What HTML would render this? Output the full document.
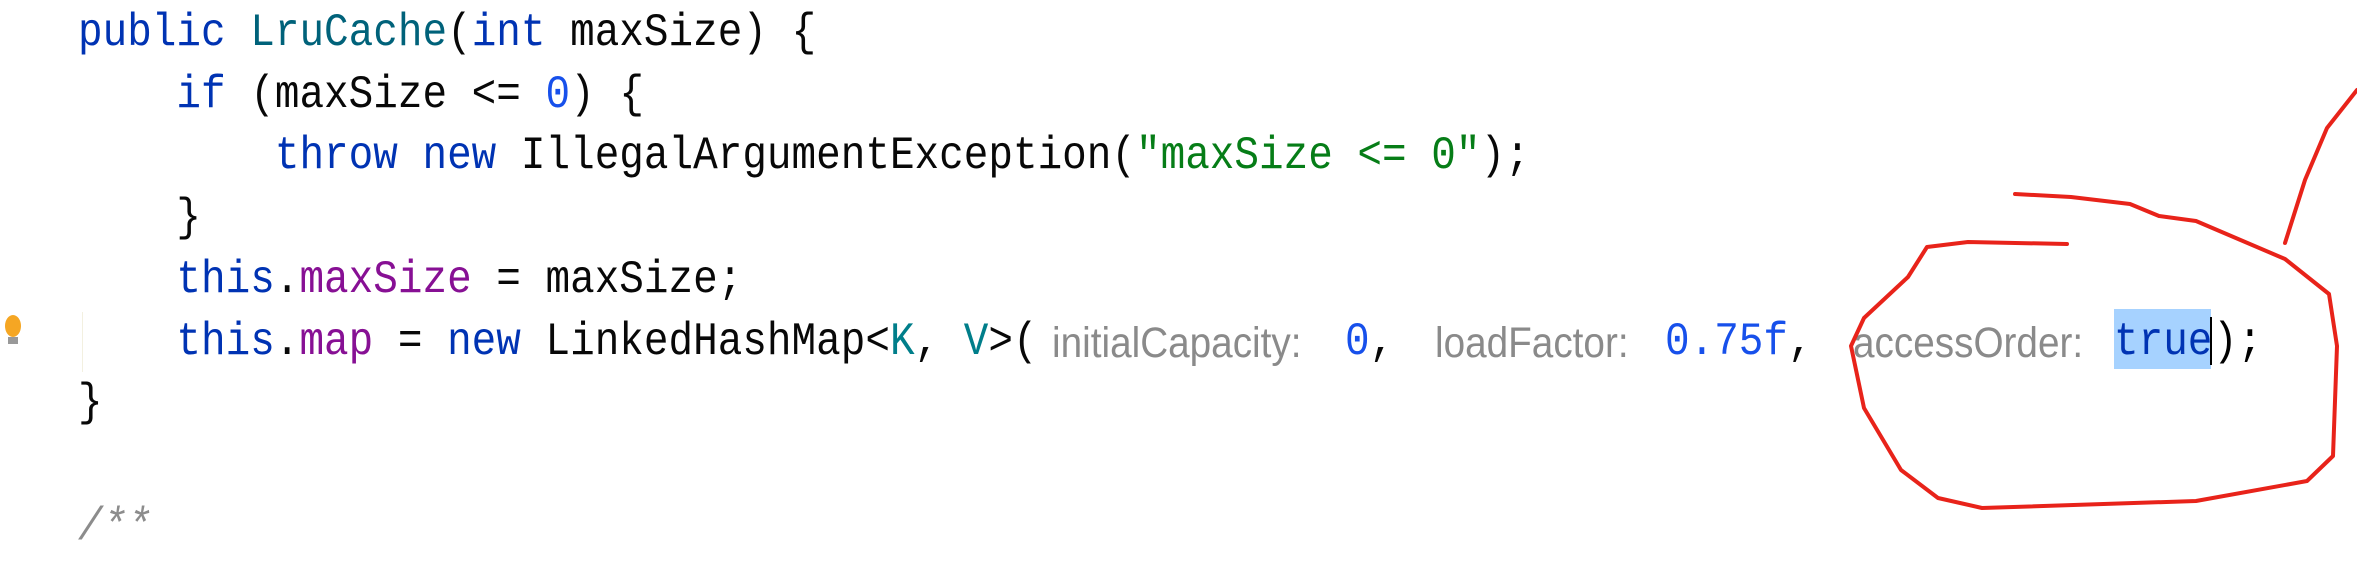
<!DOCTYPE html>
<html><head><meta charset="utf-8"><style>
body{margin:0;width:2357px;height:542px;background:#fff;overflow:hidden;position:relative}
.l{position:absolute;left:78px;font-family:"Liberation Mono",monospace;font-size:41px;line-height:62px;color:#080808;white-space:pre;transform:scaleY(1.12);transform-origin:left center}
.k{color:#0033b3}.c{color:#00627a}.f{color:#871094}.s{color:#067d17}.n{color:#1750eb}.t{color:#007e8a}
.h{position:absolute;font-family:"Liberation Sans",sans-serif;font-size:43px;color:#8a8a8a;line-height:62px;top:312px;white-space:pre;transform:scaleX(0.9);transform-origin:left center}
.m{position:absolute;top:312px;font-family:"Liberation Mono",monospace;font-size:41px;line-height:62px;white-space:pre;transform:scaleY(1.12);transform-origin:left center}
</style></head><body>
<div class="l" style="top:3px"><span class="k">public</span> <span class="c">LruCache</span>(<span class="k">int</span> maxSize) {</div>
<div class="l" style="top:65px">    <span class="k">if</span> (maxSize &lt;= <span class="n">0</span>) {</div>
<div class="l" style="top:126px">        <span class="k">throw new</span> IllegalArgumentException(<span class="s">"maxSize &lt;= 0"</span>);</div>
<div class="l" style="top:188px">    }</div>
<div class="l" style="top:250px">    <span class="k">this</span>.<span class="f">maxSize</span> = maxSize;</div>
<div class="l" style="top:312px">    <span class="k">this</span>.<span class="f">map</span> = <span class="k">new</span> LinkedHashMap&lt;<span class="t">K</span>, <span class="t">V</span>&gt;(</div>
<div class="h" style="left:1052px">initialCapacity:</div>
<div class="m n" style="left:1345px">0<span style="color:#080808">,</span></div>
<div class="h" style="left:1435px">loadFactor:</div>
<div class="m n" style="left:1665px">0.75f<span style="color:#080808">,</span></div>
<div class="h" style="left:1853px">accessOrder:</div>
<div style="position:absolute;left:2114px;top:309px;width:97px;height:60px;background:#a6d2ff"></div>
<div class="m k" style="left:2114px">true</div>
<div style="position:absolute;left:2210px;top:317px;width:2px;height:48px;background:#000"></div>
<div class="m" style="left:2213px">);</div>
<div class="l" style="top:373px">}</div>
<div class="l" style="top:497px;color:#8c8c8c;font-style:italic">/**</div>
<div style="position:absolute;left:82px;top:312px;width:1px;height:60px;background:#f3f0e0"></div>
<svg style="position:absolute;left:0;top:0" width="2357" height="542">
<ellipse cx="13" cy="326" rx="8" ry="11" fill="#f5a623"/>
<rect x="8" y="337" width="10" height="7" fill="#999"/>
<path d="M2015 194 L2071 197 L2130 204 L2159 216 L2196 221 L2285 259 L2329 294 L2337 346 L2333 456 L2307 481 L2196 501 L1982 508 L1938 498 L1901 470 L1864 408 L1851 346 L1864 318 L1908 277 L1927 247 L1968 242 L2067 244" fill="none" stroke="#e8231a" stroke-width="4" stroke-linejoin="round" stroke-linecap="round"/>
<path d="M2285 243 L2305 180 L2327 128 L2357 90" fill="none" stroke="#e8231a" stroke-width="4" stroke-linecap="round"/>
</svg>
</body></html>
